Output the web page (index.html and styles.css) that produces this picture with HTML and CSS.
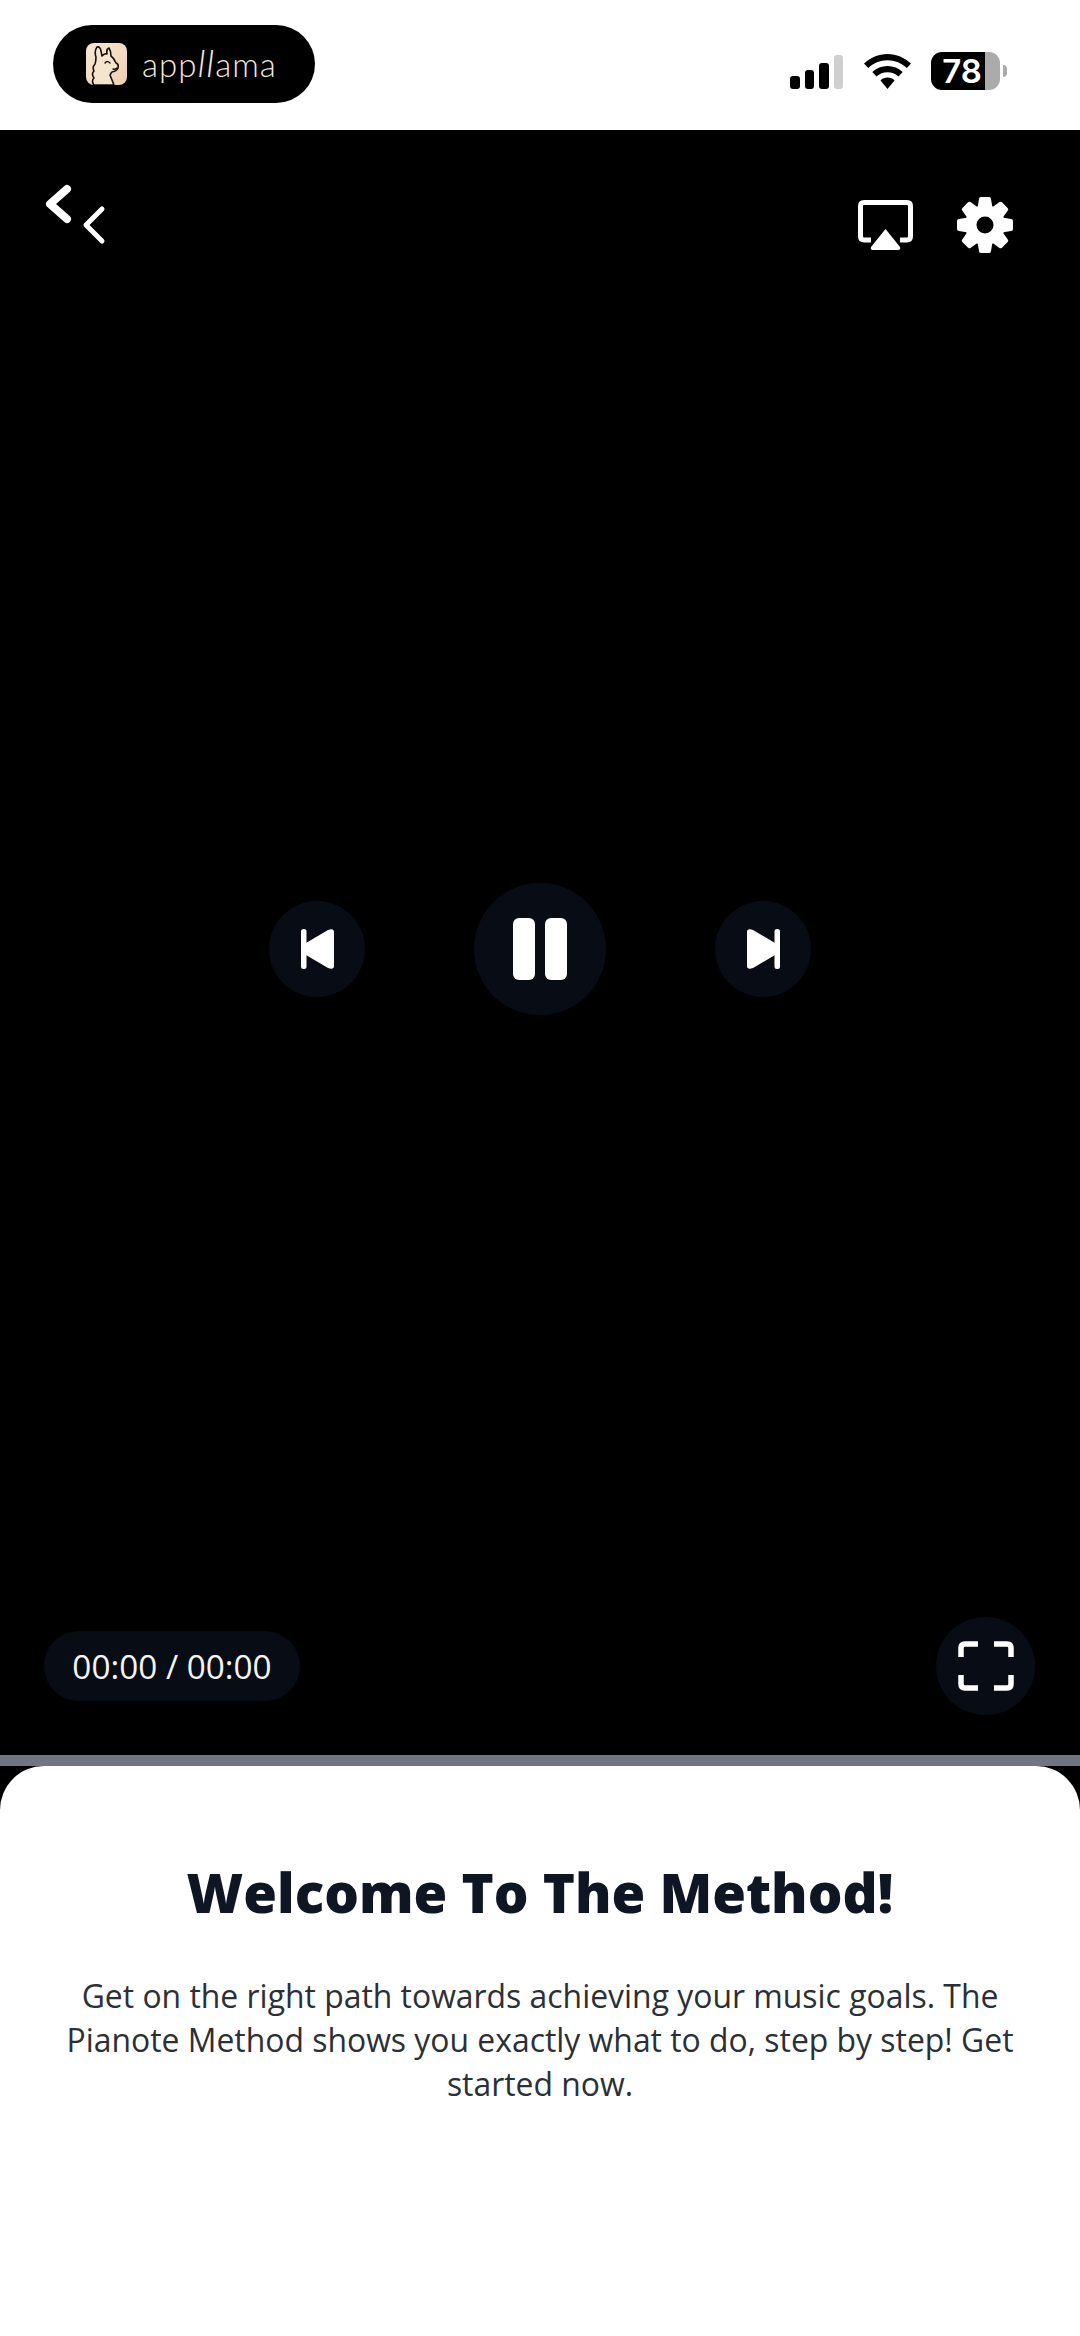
FILE: index.html
```html
<!DOCTYPE html>
<html lang="en">
<head>
  <meta charset="UTF-8">
  <meta name="viewport" content="width=device-width, initial-scale=1.0">
  <title>Welcome To The Method</title>
  <link rel="stylesheet" href="styles.css">
</head>
<body>
  <div class="status-bar">
    <div class="brand-pill">
      <svg class="brand-logo" viewBox="0 0 41 42">
        <defs>
          <linearGradient id="tile" x1="0" y1="0" x2="1" y2="1">
            <stop offset="0" stop-color="#f8e8d6"/>
            <stop offset="1" stop-color="#eed0b0"/>
          </linearGradient>
        </defs>
        <rect width="41" height="42" rx="8" fill="url(#tile)"/>
        <path d="M8 42Q5 38 8 35Q5 31 8 28Q6 24 9 21Q10 18 10 14Q8 8 11 4Q14 3 15 8L16 13Q19 10 21 11Q20 6 23 5Q25 8 25 13Q28 15 30 20Q33 21 32 25Q31 28 26 29Q25 30 24 32L28 42Z" fill="#f7e4cf" stroke="#15100c" stroke-width="1.6" stroke-linejoin="round"/>
        <path d="M19 20Q21 17 24 20M27 26Q29 27 31 25" fill="none" stroke="#15100c" stroke-width="1.4" stroke-linecap="round"/>
      </svg>
      <span class="brand-name">app<span class="brand-loop">ll</span>ama</span>
    </div>
    <div class="status-icons">
      <div class="signal">
        <span class="bar bar-1"></span>
        <span class="bar bar-2"></span>
        <span class="bar bar-3"></span>
        <span class="bar bar-4"></span>
      </div>
      <svg class="wifi" viewBox="0 0 47 35">
        <path d="M23.5 0C14.5 0 6.5 3.5 0 9.6L4.2 14C9.4 9.2 16 6.3 23.5 6.3S37.6 9.2 42.8 14L47 9.6C40.5 3.5 32.5 0 23.5 0Z"/>
        <path d="M23.5 12C17.6 12 12.3 14.2 8.3 18L12.5 22.4C15.4 19.8 19.2 18.2 23.5 18.2S31.6 19.8 34.5 22.4L38.7 18C34.7 14.2 29.4 12 23.5 12Z"/>
        <path d="M23.5 23.6C20.8 23.6 18.4 24.6 16.5 26.4L23.5 35L30.5 26.4C28.6 24.6 26.2 23.6 23.5 23.6Z"/>
      </svg>
      <div class="battery">
        <div class="battery-body">
          <span class="battery-level">78</span>
          <span class="battery-rest"></span>
        </div>
        <span class="battery-nub"></span>
      </div>
    </div>
  </div>

  <div class="video">
    <div class="video-top">
      <svg class="icon-back" viewBox="0 0 62 66">
        <path d="M23 5L6 20L23 35" fill="none" stroke="#fff" stroke-width="8" stroke-linecap="round" stroke-linejoin="round"/>
        <path d="M58 25L42 41L58 57" fill="none" stroke="#fff" stroke-width="5" stroke-linecap="round" stroke-linejoin="round"/>
      </svg>
      <div class="video-actions">
        <svg class="icon-airplay" viewBox="0 0 55 50">
          <path d="M13 40H6Q2.500 40 2.500 36V6Q2.500 2.500 6 2.500H49Q52.500 2.500 52.500 6V36Q52.500 40 49 40H42" fill="none" stroke="#fff" stroke-width="5"/>
          <path d="M27.500 29L13 47Q12 50 15 50H40Q43 50 42 47Z" fill="#fff"/>
        </svg>
        <svg class="icon-gear" viewBox="0 0 56 56">
          <defs>
            <path id="tooth" d="M22 2Q22 0 24 0H32Q34 0 34 2L36 14H20Z" fill="#fff"/>
          </defs>
          <circle cx="28" cy="28" r="20" fill="#fff"/>
          <use href="#tooth"/>
          <use href="#tooth" transform="rotate(45 28 28)"/>
          <use href="#tooth" transform="rotate(90 28 28)"/>
          <use href="#tooth" transform="rotate(135 28 28)"/>
          <use href="#tooth" transform="rotate(180 28 28)"/>
          <use href="#tooth" transform="rotate(225 28 28)"/>
          <use href="#tooth" transform="rotate(270 28 28)"/>
          <use href="#tooth" transform="rotate(315 28 28)"/>
          <circle cx="28" cy="28" r="8.5" fill="#000"/>
        </svg>
      </div>
    </div>

    <div class="video-controls">
      <button class="round-btn skip-btn">
        <svg class="icon-skip" viewBox="0 0 33 40">
          <rect x="0" y="0" width="5.500" height="40" rx="2.500" fill="#fff"/>
          <path d="M5 14L27 1Q33 -1 33 3V37Q33 41 27 39L5 26Z" fill="#fff"/>
        </svg>
      </button>
      <button class="round-btn pause-btn">
        <span class="pause-bar"></span>
        <span class="pause-bar"></span>
      </button>
      <button class="round-btn skip-btn">
        <svg class="icon-skip" viewBox="0 0 33 40">
          <rect x="27.500" y="0" width="5.500" height="40" rx="2.500" fill="#fff"/>
          <path d="M28 14L6 1Q0 -1 0 3V37Q0 41 6 39L28 26Z" fill="#fff"/>
        </svg>
      </button>
    </div>

    <div class="video-bottom">
      <div class="time-pill">00:00 / 00:00</div>
      <button class="round-btn fullscreen-btn">
        <svg class="icon-fullscreen" viewBox="0 0 56 50">
          <path d="M20 3H7Q3 3 3 7V16M36 3H49Q53 3 53 7V16M20 47H7Q3 47 3 43V34M36 47H49Q53 47 53 43V34" fill="none" stroke="#fff" stroke-width="5.5"/>
        </svg>
      </button>
    </div>
  </div>

  <div class="progress-track"></div>

  <div class="sheet-wrap">
    <div class="sheet">
      <h1 class="sheet-title">Welcome To The Method!</h1>
      <p class="sheet-text">Get on the right path towards achieving your music goals. The Pianote Method shows you exactly what to do, step by step! Get started now.</p>
    </div>
  </div>
</body>
</html>
```

FILE: styles.css
```css
* {
  box-sizing: border-box;
}
html, body {
  height: 100%;
}
body {
  margin: 0;
  display: flex;
  flex-direction: column;
  font-family: "Open Sans", "Liberation Sans", sans-serif;
  background: #000;
  overflow: hidden;
}
button {
  border: 0;
  padding: 0;
}

/* status bar */
.status-bar {
  height: 130px;
  flex: none;
  display: flex;
  justify-content: space-between;
  align-items: flex-start;
  padding: 25px 73px 0 53px;
  background: #fff;
}
.brand-pill {
  width: 262px;
  height: 78px;
  display: flex;
  align-items: center;
  gap: 15px;
  padding-left: 33px;
  border-radius: 39px;
  background: #000;
}
.brand-logo {
  width: 41px;
  height: 42px;
}
.brand-name {
  font-family: Lato, sans-serif;
  font-weight: 300;
  font-size: 33px;
  line-height: 42px;
  color: #f2e8da;
  letter-spacing: 1px;
}
.brand-loop {
  font-size: 38px;
  font-style: italic;
  line-height: 1;
}
.status-icons {
  display: flex;
  align-items: flex-end;
  gap: 21px;
  height: 64px;
}
.signal {
  display: flex;
  align-items: flex-end;
  gap: 5px;
}
.bar {
  width: 9.5px;
  border-radius: 3px;
  background: #000;
}
.bar-1 { height: 13px; }
.bar-2 { height: 19px; }
.bar-3 { height: 26px; }
.bar-4 { height: 34px; background: #cfcfcf; }
.wifi {
  width: 47px;
  height: 35px;
}
.battery {
  display: flex;
  align-items: center;
  gap: 3px;
  margin: 0 0 -1px -1px;
}
.battery-body {
  width: 69px;
  height: 38px;
  display: flex;
}
.battery-level {
  width: 54px;
  border-radius: 11px 0 0 11px;
  background: #000;
  color: #fff;
  font-family: Inter, sans-serif;
  font-weight: 600;
  font-size: 33px;
  line-height: 38px;
  text-align: right;
  padding-right: 3px;
}
.battery-rest {
  flex: 1;
  border-radius: 0 11px 11px 0;
  background: #ababab;
}
.battery-nub {
  width: 4px;
  height: 12px;
  border-radius: 0 6px 6px 0;
  background: #ababab;
}

/* video area */
.video {
  height: 1625px;
  flex: none;
  display: flex;
  flex-direction: column;
  background: #000;
}
.video-top {
  display: flex;
  justify-content: space-between;
  align-items: flex-start;
  height: 130px;
  margin-top: 54px;
  padding: 0 67px 0 44px;
}
.icon-back {
  width: 62px;
  height: 66px;
}
.video-actions {
  display: flex;
  align-items: center;
  gap: 44px;
  margin-top: 13px;
}
.icon-airplay {
  width: 55px;
  height: 50px;
}
.icon-gear {
  width: 56px;
  height: 56px;
}
.video-controls {
  display: flex;
  justify-content: center;
  align-items: center;
  gap: 109px;
  height: 132px;
  margin-top: 569px;
}
.round-btn {
  display: flex;
  justify-content: center;
  align-items: center;
  border-radius: 50%;
  background: #080c14;
}
.skip-btn {
  width: 96px;
  height: 96px;
}
.icon-skip {
  width: 33px;
  height: 40px;
}
.pause-btn {
  width: 132px;
  height: 132px;
  gap: 10px;
}
.pause-bar {
  width: 22px;
  height: 62px;
  border-radius: 6px;
  background: #fff;
}
.video-bottom {
  display: flex;
  justify-content: space-between;
  align-items: center;
  margin-top: auto;
  margin-bottom: 40px;
  padding: 0 45px 0 44px;
}
.time-pill {
  width: 256px;
  height: 70px;
  border-radius: 35px;
  background: #080c14;
  color: #f4f4f4;
  font-size: 33.3px;
  line-height: 70px;
  text-align: center;
}
.fullscreen-btn {
  width: 99px;
  height: 98px;
}
.icon-fullscreen {
  width: 56px;
  height: 50px;
}

.progress-track {
  height: 11px;
  flex: none;
  background: #6f7582;
}

/* text panel */
.sheet-wrap {
  flex: 1;
  display: flex;
  background: #000;
}
.sheet {
  flex: 1;
  padding: 90px 44px 0;
  border-radius: 44px 44px 0 0;
  background: #fff;
  text-align: center;
}
.sheet-title {
  margin: 0;
  font-size: 54.6px;
  font-weight: 800;
  line-height: 72px;
  color: #0f1623;
}
.sheet-text {
  margin: 46px 0 0;
  font-size: 31.9px;
  line-height: 44px;
  color: #2b2f36;
}
```
